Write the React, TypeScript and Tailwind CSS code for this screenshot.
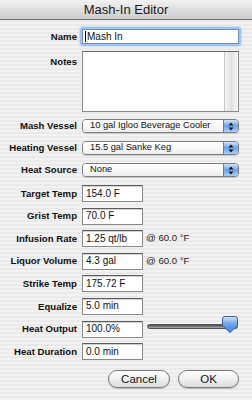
import React from 'react';

// Mac OS X style "Mash-In Editor" sheet

const font = { fontFamily: '"Liberation Sans", Arial, sans-serif' };

const Label: React.FC<{ children: React.ReactNode; className?: string }> = ({ children, className = '' }) => (
    <div className={`w-[77px] shrink-0 text-right text-[9.6px] font-bold text-[#111] leading-none whitespace-nowrap ${className}`}>
        {children}
    </div>
);

const TextField: React.FC<{ value: string; className?: string }> = ({ value, className = '' }) => (
    <div
        className={`h-[17px] shrink-0 bg-white border border-[#8a8a8a] border-t-[#5e5e5e] shadow-[inset_0_1px_0_#d0d0d0] pl-[3px] flex items-center text-[10px] text-[#111] leading-none whitespace-nowrap ${className}`}
    >
        {value}
    </div>
);

const PopupArrows = () => (
    <svg width="6" height="9" viewBox="0 0 6 9">
        <path d="M3 0.5 L5.5 3.5 L0.5 3.5 Z" fill="#111" />
        <path d="M3 8.5 L5.5 5.5 L0.5 5.5 Z" fill="#111" />
    </svg>
);

const Popup: React.FC<{ value: string }> = ({ value }) => (
    <div className="w-[157px] h-[14px] flex rounded-[4px] border border-[#7d7d7d] overflow-hidden shadow-[0_1px_1px_rgba(0,0,0,0.15)]">
        <div className="flex-1 min-w-0 bg-gradient-to-b from-white via-[#fafafa] to-[#ececec] pl-[7px] flex items-center text-[9.3px] text-[#111] leading-none whitespace-nowrap">
            {value}
        </div>
        <div className="w-[15px] shrink-0 border-l border-[#5b7fb8] bg-gradient-to-b from-[#cfe3fb] via-[#6aa3ea] to-[#a9d0fb] flex items-center justify-center">
            <PopupArrows />
        </div>
    </div>
);

const AquaButton: React.FC<{ children: React.ReactNode; className?: string }> = ({ children, className = '' }) => (
    <div
        className={`h-[18px] rounded-full border border-[#7a7a7a] bg-gradient-to-b from-white via-[#f0f0f0] to-[#dcdcdc] shadow-[0_1px_1px_rgba(0,0,0,0.2)] flex items-center justify-center text-[11.5px] text-[#111] ${className}`}
    >
        {children}
    </div>
);

const SliderThumb = () => (
    <svg width="16" height="17" viewBox="0 0 16 17">
        <defs>
            <linearGradient id="thumb" x1="0" y1="0" x2="0" y2="1">
                <stop offset="0" stopColor="#d7e8fc" />
                <stop offset="0.45" stopColor="#6ea6ec" />
                <stop offset="1" stopColor="#3f86e0" />
            </linearGradient>
        </defs>
        <path d="M3 0.5 H13 Q15.5 0.5 15.5 3 V9.5 L8 16.5 L0.5 9.5 V3 Q0.5 0.5 3 0.5 Z" fill="url(#thumb)" stroke="#3d5f95" />
    </svg>
);

const Slider = () => (
    <div className="ml-[-1px] w-[91px] h-[17px] relative flex items-center">
        <div className="w-full h-[5px] mt-[-6px] rounded-full bg-gradient-to-b from-[#4a4a4a] via-[#7a7a7a] to-[#b0b0b0] border border-[#555]" />
        <div className="absolute right-0 top-[-5px]">
            <SliderThumb />
        </div>
    </div>
);

const atTemp = <span className="ml-[-2px] text-[9.6px] text-[#222] whitespace-nowrap">@ 60.0 °F</span>;

const fieldRows: { label: string; value: string; extra?: React.ReactNode }[] = [
    { label: 'Target Temp', value: '154.0 F' },
    { label: 'Grist Temp', value: '70.0 F' },
    { label: 'Infusion Rate', value: '1.25 qt/lb', extra: atTemp },
    { label: 'Liquor Volume', value: '4.3 gal', extra: atTemp },
    { label: 'Strike Temp', value: '175.72 F' },
    { label: 'Equalize', value: '5.0 min' },
    { label: 'Heat Output', value: '100.0%', extra: <Slider /> },
    { label: 'Heat Duration', value: '0.0 min' },
];

export default function App() {
    return (
        <div
            style={font}
            className="w-[252px] h-[400px] overflow-hidden bg-[repeating-linear-gradient(to_bottom,#eaeaea_0px,#eaeaea_2px,#f2f2f2_2px,#f2f2f2_4px)] flex flex-col"
        >
            {/* title bar */}
            <div className="h-[20px] shrink-0 bg-gradient-to-b from-[#f2f2f2] to-[#cdcdcd] border-b border-[#6e6e6e] flex items-center justify-center text-[13px] text-[#1a1a1a]">
                Mash-In Editor
            </div>

            {/* name */}
            <div className="flex items-center gap-[5px] mt-[7px]">
                <Label>Name</Label>
                <div className="rounded-[3px] border-[2px] border-[#9fc3ee] shadow-[0_0_2px_#7eaee8] ml-[-2px]">
                    <div className="w-[157px] h-[15px] bg-white border border-[#6f8fbf] flex items-center pl-[2px] text-[10px] text-[#111] leading-none">
                        <span className="w-px h-[11px] bg-black mr-px" />
                        Mash In
                    </div>
                </div>
            </div>

            {/* notes */}
            <div className="flex gap-[5px] mt-[5px]">
                <Label className="pt-[6px]">Notes</Label>
                <div className="w-[157px] h-[61px] bg-white border border-[#8a8a8a] border-t-[#666] flex">
                    <div className="flex-1" />
                    <div className="w-[14px] border-l border-[#c8c8c8] bg-gradient-to-r from-[#f4f4f4] via-[#e2e2e2] to-[#f8f8f8]" />
                </div>
            </div>

            {/* popups */}
            <div className="flex flex-col gap-[8px] mt-[7px]">
                <div className="flex items-center gap-[5px]">
                    <Label>Mash Vessel</Label>
                    <Popup value="10 gal Igloo Beverage Cooler" />
                </div>
                <div className="flex items-center gap-[5px]">
                    <Label>Heating Vessel</Label>
                    <Popup value="15.5 gal Sanke Keg" />
                </div>
                <div className="flex items-center gap-[5px]">
                    <Label>Heat Source</Label>
                    <Popup value="None" />
                </div>
            </div>

            {/* numeric fields */}
            <div className="flex flex-col gap-[5.6px] mt-[8px]">
                {fieldRows.map((r) => (
                    <div key={r.label} className="flex items-center gap-[5px]">
                        <Label>{r.label}</Label>
                        <TextField value={r.value} className="w-[61px]" />
                        {r.extra}
                    </div>
                ))}
            </div>

            {/* buttons */}
            <div className="flex gap-[8px] mt-[10px] pl-[108px]">
                <AquaButton className="w-[62px]">Cancel</AquaButton>
                <AquaButton className="w-[61px]">OK</AquaButton>
            </div>
        </div>
    );
}
